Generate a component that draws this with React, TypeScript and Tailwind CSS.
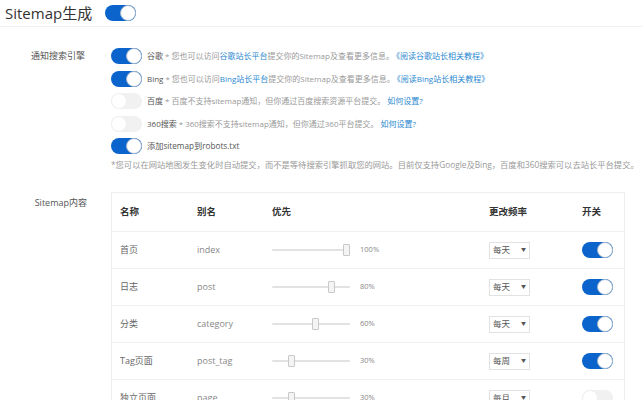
import React from 'react';

const font = { fontFamily: '"Open Sans", "Noto Sans CJK SC", sans-serif' };

function Toggle({ on }: { on: boolean }) {
  return on ? (
    <div className="relative h-[16px] w-[31px] shrink-0 rounded-full bg-[#0a64cc]">
      <div className="absolute right-0 top-0 h-[16px] w-[16px] rounded-full border border-[#9fb4cc] bg-white" />
    </div>
  ) : (
    <div className="relative h-[16px] w-[31px] shrink-0 rounded-full bg-[#f1f1f1]">
      <div className="absolute left-0 top-0 h-[16px] w-[16px] rounded-full border border-[#f0f0f0] bg-white" />
    </div>
  );
}

const engines = [
  { on: true, name: '谷歌', pre: '您也可以访问', link: '谷歌站长平台', post: '提交你的Sitemap及查看更多信息。', tail: '《阅读谷歌站长相关教程》' },
  { on: true, name: 'Bing', pre: '您也可以访问', link: 'Bing站长平台', post: '提交你的Sitemap及查看更多信息。', tail: '《阅读Bing站长相关教程》' },
  { on: false, name: '百度', pre: '百度不支持sitemap通知，但你通过百度搜索资源平台提交。', link: '', post: '', tail: '如何设置?' },
  { on: false, name: '360搜索', pre: '360搜索不支持sitemap通知，但你通过360平台提交。', link: '', post: '', tail: '如何设置?' },
];

const rows = [
  { name: '首页', alias: 'index', pct: 100, pos: 71, freq: '每天', on: true },
  { name: '日志', alias: 'post', pct: 80, pos: 56, freq: '每天', on: true },
  { name: '分类', alias: 'category', pct: 60, pos: 40, freq: '每天', on: true },
  { name: 'Tag页面', alias: 'post_tag', pct: 30, pos: 16, freq: '每周', on: true },
  { name: '独立页面', alias: 'page', pct: 30, pos: 16, freq: '每月', on: false },
];

export default function App() {
  return (
    <div className="h-[400px] w-[643px] overflow-hidden bg-white text-[#555]" style={font}>
      {/* Header */}
      <div className="flex h-[27px] items-center border-b border-[#f1f1f1] pl-[5px]">
        <span className="text-[15px] text-[#333]">Sitemap生成</span>
        <div className="ml-[13px]">
          <Toggle on />
        </div>
      </div>

      {/* Notify engines */}
      <div className="mt-[21px] flex">
        <div className="w-[111px] shrink-0 pr-[26px] pt-[2px] text-right text-[9px] leading-[12px] text-[#555]">
          通知搜索引擎
        </div>
        <div className="flex flex-col">
          <div className="flex flex-col gap-[6.5px]">
            {engines.map((e) => (
              <div key={e.name} className="flex h-[16px] items-center gap-[5px]">
                <Toggle on={e.on} />
                <span className="whitespace-nowrap text-[8px] text-[#999]">
                  <span className="text-[#555]">{e.name}</span>
                  <span className="mx-[2px]">*</span>
                  {e.pre}
                  {e.link && <span className="text-[#2a88d0]">{e.link}</span>}
                  {e.post}
                  <span className="ml-[2px] text-[#2a88d0]">{e.tail}</span>
                </span>
              </div>
            ))}
            <div className="flex h-[16px] items-center gap-[5px]">
              <Toggle on />
              <span className="text-[8.2px] text-[#555]">添加sitemap到robots.txt</span>
            </div>
          </div>
          <div className="mt-[5px] whitespace-nowrap text-[8.3px] leading-[12px] text-[#999]">
            *您可以在网站地图发生变化时自动提交，而不是等待搜索引擎抓取您的网站。目前仅支持Google及Bing，百度和360搜索可以去站长平台提交。
          </div>
        </div>
      </div>

      {/* Sitemap content */}
      <div className="mt-[21px] flex">
        <div className="w-[111px] shrink-0 pr-[24px] pt-[5px] text-right text-[9px] leading-[12px] text-[#555]">
          Sitemap内容
        </div>
        <div className="w-[514px] border border-[#eeeeee]">
          <div className="flex h-[39px] items-center border-b border-[#f0f0f0] pl-[8px] text-[9.5px] font-bold text-[#333]">
            <div className="w-[77px]">名称</div>
            <div className="w-[75px]">别名</div>
            <div className="w-[217px]">优先</div>
            <div className="w-[93px]">更改频率</div>
            <div>开关</div>
          </div>
          {rows.map((r) => (
            <div key={r.name} className="flex h-[37px] items-center border-b border-[#f0f0f0] pl-[8px] text-[9px] text-[#666]">
              <div className="w-[77px]">{r.name}</div>
              <div className="w-[75px] text-[#888]">{r.alias}</div>
              <div className="flex w-[217px] items-center">
                <div className="relative h-[12px] w-[78px]">
                  <div className="absolute left-0 right-0 top-[5px] h-[2px] rounded bg-[#e2e2e2]" />
                  <div
                    className="absolute top-0 h-[12px] w-[7px] rounded-[1px] border border-[#c8c8c8] bg-[#f4f4f4]"
                    style={{ left: r.pos }}
                  />
                </div>
                <span className="ml-[10px] text-[7.5px] text-[#888]">{r.pct}%</span>
              </div>
              <div className="w-[93px]">
                <div className="flex h-[17px] w-[41px] items-center justify-between border border-[#e2e2e2] px-[3px] text-[8.5px] text-[#555]">
                  <span>{r.freq}</span>
                  <span className="text-[5px]">▼</span>
                </div>
              </div>
              <Toggle on={r.on} />
            </div>
          ))}
        </div>
      </div>
    </div>
  );
}
